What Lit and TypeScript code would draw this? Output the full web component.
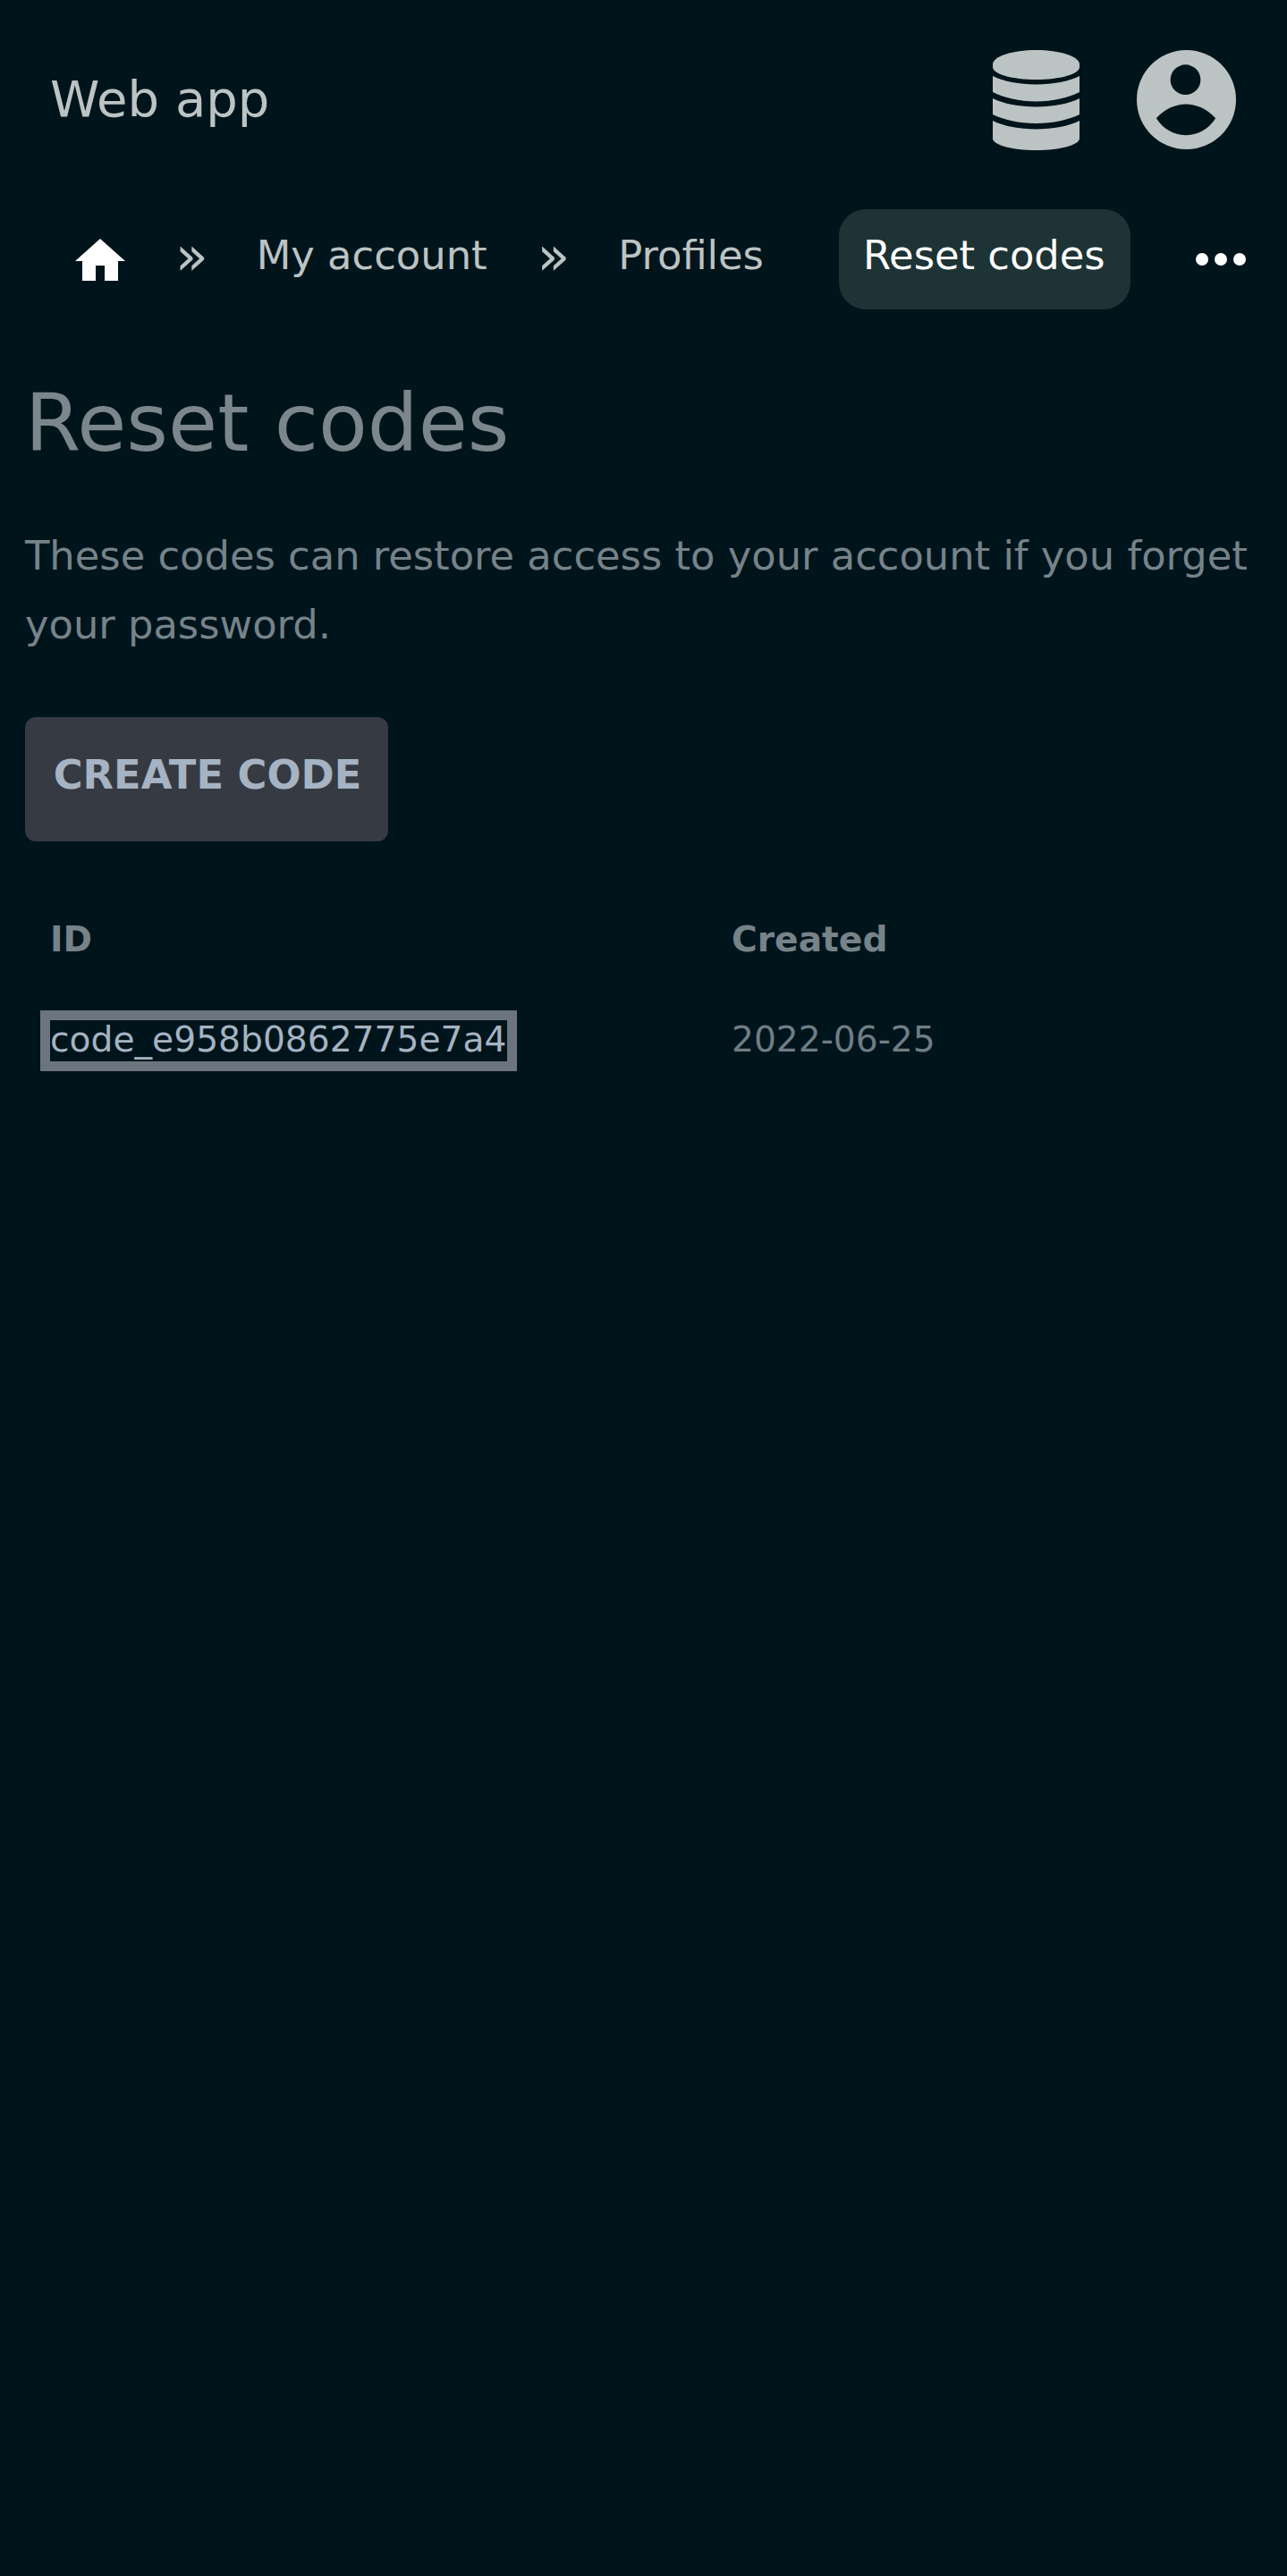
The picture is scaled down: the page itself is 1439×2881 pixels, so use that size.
import { LitElement, css, html } from 'lit';
import { customElement } from 'lit/decorators.js';

@customElement('app-root')
export class AppRoot extends LitElement {
  static styles = css`
    :host {
      display: block;
      min-height: 2881px;
      background-color: #00141b;
      font-family: 'DejaVu Sans', sans-serif;
      color: #bcc3c3;
    }
    .topbar {
      display: flex;
      align-items: flex-start;
      justify-content: space-between;
      height: 234px;
      padding: 56px 57px 0 56px;
      box-sizing: border-box;
    }
    .brand {
      font-size: 56px;
      line-height: 110px;
    }
    .tools {
      display: flex;
      gap: 64px;
    }
    .db { width: 97px; height: 112px; display: block; }
    .user { width: 111px; height: 111px; display: block; }
    .crumbs {
      display: flex;
      align-items: flex-start;
      height: 112px;
      font-size: 44.8px;
      line-height: 52px;
    }
    .home {
      width: 56px;
      height: 47px;
      margin: 33px 0 0 84px;
      display: block;
    }
    .sep {
      margin-top: 26px;
      margin-left: 56px;
      font-size: 60px;
      line-height: 52px;
    }
    .crumb { margin-top: 26px; }
    .crumb.account { margin-left: 54px; }
    .crumb.profiles { margin-left: 54px; }
    .pill {
      margin-left: 84px;
      padding: 26px 28px 0 27px;
      height: 112px;
      box-sizing: border-box;
      border-radius: 30px;
      background-color: #1e3335;
      color: #fff;
    }
    .dots {
      display: flex;
      gap: 7px;
      margin: 49px 0 0 73px;
    }
    .dots span {
      width: 14px;
      height: 14px;
      border-radius: 50%;
      background-color: #fff;
    }
    main { padding: 0 28px; }
    h1 {
      margin: 74px 0 0 0;
      font-size: 89.6px;
      font-weight: 400;
      line-height: 106px;
      color: #7b878c;
    }
    p {
      margin: 57px 0 0 0;
      font-size: 44.8px;
      line-height: 77px;
      color: #768389;
    }
    button {
      display: block;
      margin-top: 65px;
      width: 406px;
      height: 139px;
      padding: 0 0 10px 2px;
      border: none;
      border-radius: 12px;
      background-color: #353a43;
      color: #a5b3c2;
      font-family: inherit;
      font-size: 44.8px;
      font-weight: 700;
    }
    .table {
      display: grid;
      grid-template-columns: 762px 1fr;
      margin-top: 87px;
      padding-left: 28px;
      font-size: 39.2px;
      line-height: 46px;
    }
    .th {
      font-weight: 700;
      color: #768389;
    }
    .code, .date {
      margin-top: 67px;
      padding-bottom: 2px;
      line-height: 44px;
    }
    .code {
      justify-self: start;
      padding-right: 1px;
      outline: 11.2px solid #6c757d;
      color: #a5b3c2;
    }
    .date { color: #6f7d85; }
  `;

  render () {
    return html`
      <header class="topbar">
        <div class="brand">Web app</div>
        <div class="tools">
          <svg class="db" viewBox="0 0 97 112" fill="#bcc3c3">
            <path d="M0 16C0 7 22 0 48.5 0S97 7 97 16V19C97 27 75 33 48.5 33S0 27 0 19Z" />
            <path d="M0 29C12 35 30 38.5 48.5 38.5S85 35 97 29V47C85 53 67 57.5 48.5 57.5S12 53 0 47Z" />
            <path d="M0 54C12 60 30 63.5 48.5 63.5S85 60 97 54V72C85 78 67 82 48.5 82S12 78 0 72Z" />
            <path d="M0 79C12 85 30 88.5 48.5 88.5S85 85 97 79V99C97 106 75 112 48.5 112S0 106 0 99Z" />
          </svg>
          <svg class="user" viewBox="0 0 112 112" fill="#bcc3c3" fill-rule="evenodd">
            <path d="M56 0A56 56 0 1 1 56 112A56 56 0 1 1 56 0ZM55 16.500A17 17 0 1 0 55 50.500A17 17 0 1 0 55 16.500ZM22 77C32 66 44 61 55.500 61S79 66 89 77C81 89 70 96 55.500 96S30 89 22 77Z" />
          </svg>
        </div>
      </header>
      <nav class="crumbs">
        <svg class="home" viewBox="0 0 56 47" fill="#fff">
          <path d="M28 0L56 25H48V47H33V30H23V47H8V25H0Z" />
        </svg>
        <span class="sep">»</span>
        <span class="crumb account">My account</span>
        <span class="sep">»</span>
        <span class="crumb profiles">Profiles</span>
        <span class="pill">Reset codes</span>
        <span class="dots"><span></span><span></span><span></span></span>
      </nav>
      <main>
        <h1>Reset codes</h1>
        <p>These codes can restore access to your account if you forget your password.</p>
        <button>CREATE CODE</button>
        <div class="table">
          <div class="th">ID</div>
          <div class="th">Created</div>
          <div class="code">code_e958b0862775e7a4</div>
          <div class="date">2022-06-25</div>
        </div>
      </main>
    `;
  }
}
